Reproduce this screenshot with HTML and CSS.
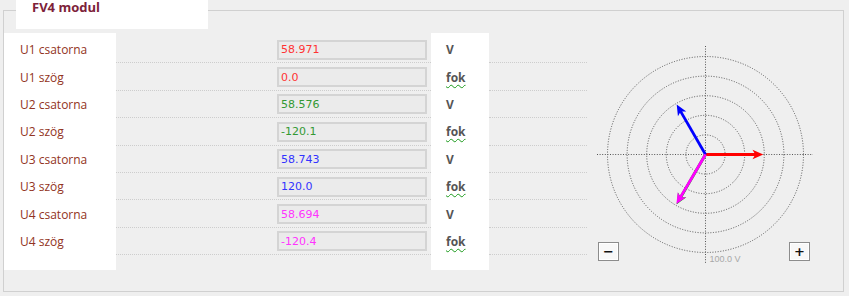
FILE: index.html
```html
<!DOCTYPE html>
<html lang="hu">
<head>
  <meta charset="UTF-8">
  <title>FV4 modul</title>
  <link rel="stylesheet" href="styles.css">
</head>
<body>

  <div class="panel">
    <div class="tab">FV4 modul</div>

    <div class="content">
      <div class="labels">
        <div class="label">U1 csatorna</div>
        <div class="label">U1 szög</div>
        <div class="label">U2 csatorna</div>
        <div class="label">U2 szög</div>
        <div class="label">U3 csatorna</div>
        <div class="label">U3 szög</div>
        <div class="label">U4 csatorna</div>
        <div class="label">U4 szög</div>
      </div>

      <div class="values">
        <div class="row"><input class="val red" value="58.971" readonly></div>
        <div class="row"><input class="val red" value="0.0" readonly></div>
        <div class="row"><input class="val green" value="58.576" readonly></div>
        <div class="row"><input class="val green" value="-120.1" readonly></div>
        <div class="row"><input class="val blue" value="58.743" readonly></div>
        <div class="row"><input class="val blue" value="120.0" readonly></div>
        <div class="row"><input class="val magenta" value="58.694" readonly></div>
        <div class="row"><input class="val magenta" value="-120.4" readonly></div>
      </div>

      <div class="units">
        <div class="unit">V</div>
        <div class="unit"><span class="fok">fok</span></div>
        <div class="unit">V</div>
        <div class="unit"><span class="fok">fok</span></div>
        <div class="unit">V</div>
        <div class="unit"><span class="fok">fok</span></div>
        <div class="unit">V</div>
        <div class="unit"><span class="fok">fok</span></div>
      </div>

      <div class="filler">
        <div class="row"></div>
        <div class="row"></div>
        <div class="row"></div>
        <div class="row"></div>
        <div class="row"></div>
        <div class="row"></div>
        <div class="row"></div>
        <div class="row"></div>
      </div>

      <div class="chart">
        <svg width="240" height="240" viewBox="0 0 240 240">
          <!-- racs -->
          <g class="grid">
            <circle cx="115.5" cy="124.5" r="19.6"/>
            <circle cx="115.5" cy="124.5" r="39.2"/>
            <circle cx="115.5" cy="124.5" r="58.8"/>
            <circle cx="115.5" cy="124.5" r="78.4"/>
            <circle cx="115.5" cy="124.5" r="98"/>
            <line x1="7" y1="124.5" x2="223" y2="124.5"/>
            <line x1="115.5" y1="16" x2="115.5" y2="233"/>
          </g>
          <text class="scale" x="119.5" y="232">100.0 V</text>

          <!-- vektorok -->
          <g transform="translate(115.5 124.5)">
            <g class="vec" stroke="#f00" fill="#f00">
              <line x1="0" y1="0" x2="52" y2="0"/>
              <path d="M57.8,0 L47,-4.8 L49.8,0 L47,4.8 z"/>
            </g>
            <g class="vec" stroke="#0a0" fill="#0a0" transform="rotate(120.1)">
              <line x1="0" y1="0" x2="51.6" y2="0"/>
              <path d="M57.4,0 L46.6,-4.8 L49.4,0 L46.6,4.8 z"/>
            </g>
            <g class="vec" stroke="#00f" fill="#00f" transform="rotate(-120)">
              <line x1="0" y1="0" x2="51.8" y2="0"/>
              <path d="M57.6,0 L46.8,-4.8 L49.6,0 L46.8,4.8 z"/>
            </g>
            <g class="vec" stroke="#f0f" fill="#f0f" transform="rotate(120.4)">
              <line x1="0" y1="0" x2="51.7" y2="0"/>
              <path d="M57.5,0 L46.7,-4.8 L49.5,0 L46.7,4.8 z"/>
            </g>
          </g>
        </svg>
        <button class="zoom minus">&minus;</button>
        <button class="zoom plus">+</button>
      </div>
    </div>
  </div>

</body>
</html>
```

FILE: styles.css
```css
body {
  margin: 0;
  background: #efefef;
  font-family: "Open Sans", Arial, sans-serif;
}

.panel {
  position: relative;
  margin: 10px 5px 0 3px;
  height: 280px;
  border: 1px solid #d0d0d0;
}

.tab {
  position: absolute;
  left: 12px;
  top: -11px;
  width: 192px;
  height: 29px;
  box-sizing: border-box;
  padding-left: 16px;
  background: #fff;
  color: #7d2239;
  font-size: 13px;
  font-weight: bold;
  line-height: 14px;
}

.content {
  display: flex;
  padding-top: 22px;
}

.labels {
  width: 112px;
  padding: 3px 0;
  background: #fff;
}

.label {
  height: 27.4px;
  padding-left: 16px;
  display: flex;
  align-items: center;
  font-size: 12px;
  color: #923322;
}

.values {
  width: 315px;
  padding-top: 3px;
}

.filler {
  width: 98px;
  padding-top: 3px;
}

.row {
  height: 27.4px;
  box-sizing: border-box;
  border-bottom: 1px dotted #cdcdcd;
  display: flex;
  align-items: center;
}

.values .row {
  padding-left: 161px;
}

.val {
  width: 150px;
  height: 20px;
  box-sizing: border-box;
  margin: 1px 0 0;
  padding: 0 2px;
  border: 2px solid #d4d4d4;
  background: #ebebeb;
  font-family: "DejaVu Sans", Arial, sans-serif;
  font-size: 11px;
  outline: none;
}

.val.red { color: #ff3333; }
.val.green { color: #339933; }
.val.blue { color: #3333ff; }
.val.magenta { color: #ff33ff; }

.units {
  width: 58px;
  padding: 3px 0 9px;
  background: #fff;
}

.unit {
  height: 27.4px;
  padding-left: 15px;
  display: flex;
  align-items: center;
  font-size: 12px;
  font-weight: bold;
  color: #555;
}

.fok {
  text-decoration: underline wavy #1a9a1a;
  text-decoration-thickness: 1px;
  text-underline-offset: 2px;
}

.chart {
  position: relative;
  width: 240px;
  height: 240px;
  margin: -3px 0 0 3px;
}

.chart svg {
  display: block;
}

.grid circle,
.grid line {
  fill: none;
  stroke: #555;
  stroke-width: 1;
  stroke-dasharray: 1 1.6;
}

.scale {
  font-family: "Liberation Sans", Arial, sans-serif;
  font-size: 9px;
  fill: #a8a8a8;
}

.vec line {
  stroke-width: 2.8;
}

.vec path {
  stroke: none;
}

.zoom {
  position: absolute;
  top: 212px;
  width: 21px;
  height: 19px;
  padding: 0;
  border: 1px solid #8c8c8c;
  background: #f8f8f8;
  box-shadow: inset 0 0 0 1px #fff;
  color: #111;
  font-family: "DejaVu Sans", Arial, sans-serif;
  font-size: 13px;
  font-weight: bold;
  line-height: 15px;
}

.zoom.minus { left: 8px; }
.zoom.plus { left: 199px; }
```
